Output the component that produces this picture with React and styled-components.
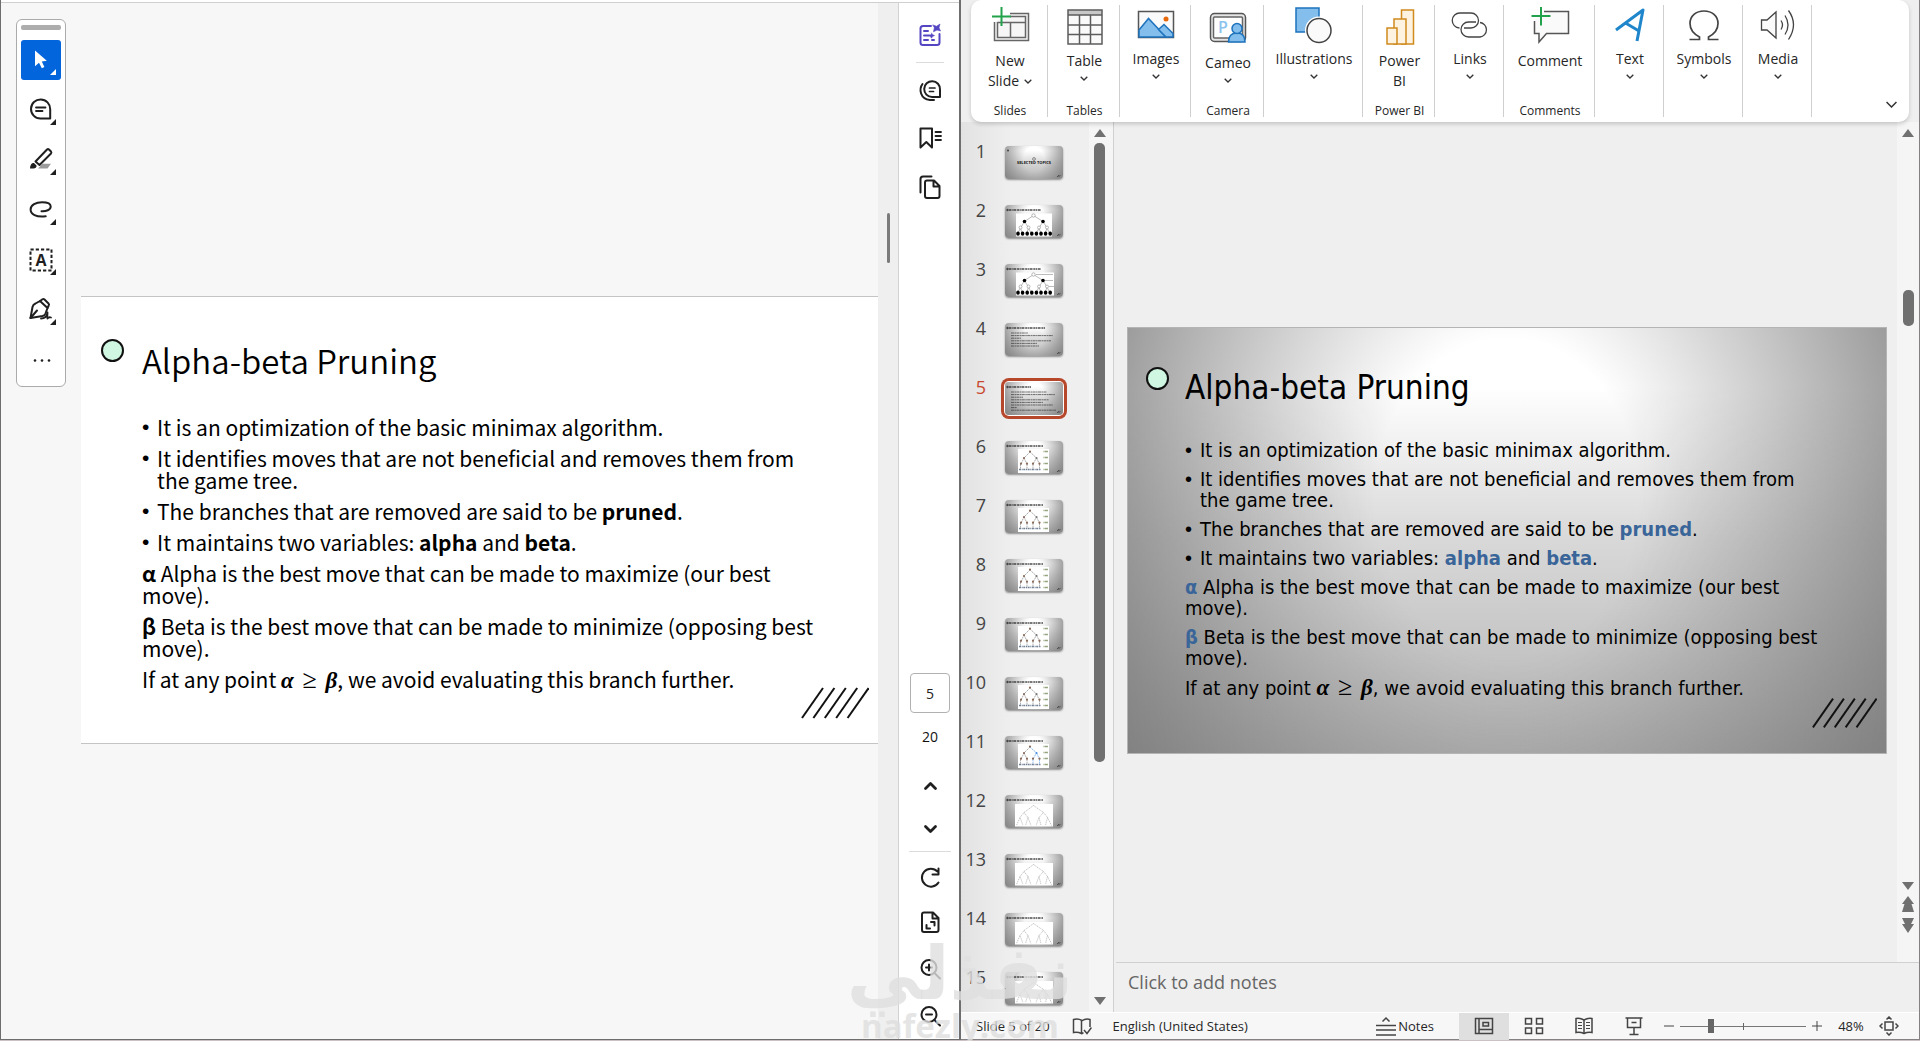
import React from 'react';
import styled, { createGlobalStyle, css } from 'styled-components';

const GlobalStyle = createGlobalStyle`
    * {
        box-sizing: border-box;
    }

    body {
        margin: 0;
        font-family: 'Open Sans', sans-serif;
        color: #262626;
        overflow: hidden;
    }

    button {
        border: 0;
        padding: 0;
        background: none;
        font: inherit;
        color: inherit;
    }

    svg {
        display: block;
        flex: none;
    }
`;

const Desktop = styled.div`
    position: relative;
    display: grid;
    grid-template-columns: 961fr 959fr;
    height: 100vh;
    border-bottom: 1px solid #cbc0c2;
`;

/* ---------- pdf reader ---------- */

const Reader = styled.section`
    position: relative;
    display: flex;
    min-width: 0;
    background: #f7f7f7;
    border: solid #6e6e6e;
    border-width: 0 2px 1px 1px;
`;

const ReaderEdge = styled.div`
    position: absolute;
    inset: 0 0 auto 0;
    height: 3px;
    background: #fff;
    border-bottom: 1px solid #cfcfcf;
`;

const ReaderCanvas = styled.div`
    flex: 1;
    min-width: 0;
    display: flex;
    align-items: center;
    padding: 1px 0 0 80px;
`;

const ReaderScroll = styled.div`
    width: 20px;
    padding: 213px 8px 0 9px;
    background: #efefef;
`;

const ReaderScrollThumb = styled.div`
    height: 50px;
    border-radius: 2px;
    background: #7a7a7a;
`;

const FloatingTools = styled.div`
    position: absolute;
    left: 15px;
    top: 19px;
    width: 50px;
    display: flex;
    flex-direction: column;
    align-items: center;
    gap: 10px;
    padding: 5px 0 6px;
    background: #fff;
    border: 1px solid #ababab;
    border-radius: 6px;
`;

const Grip = styled.div`
    width: 40px;
    height: 5px;
    border-radius: 2px;
    background: #adadad;
`;

const ToolButton = styled.button`
    width: 40px;
    height: 40px;
    border-radius: 3px;
    color: ${({ $active }) => ($active ? '#fff' : '#1f1f1f')};
    background: ${({ $active }) => ($active ? '#0265dc' : 'transparent')};
`;

const Rail = styled.div`
    display: flex;
    flex-direction: column;
    width: 61px;
    padding: 22px 0 10px 2px;
    align-items: center;
    background: #fff;
    border-left: 1px solid #d2d2d2;
    color: #1f1f1f;
`;

const RailButton = styled.button`
    width: 26px;
    height: 26px;
    margin-bottom: ${({ $gap }) => $gap || 0}px;

    svg {
        margin: 0 auto;
    }
`;

const RailLine = styled.hr`
    width: ${({ $wide }) => ($wide ? 42 : 28)}px;
    margin: ${({ $wide }) => ($wide ? '9px 0 13px' : '14px 0 14px')};
    border: 0;
    border-top: 1px solid #dcdcdc;
`;

const PageInput = styled.input`
    width: 40px;
    height: 40px;
    margin-top: auto;
    border: 1px solid #b1b1b1;
    border-radius: 4px;
    text-align: center;
    font: 14px 'Open Sans', sans-serif;
    color: #222;
`;

const PageTotal = styled.div`
    margin: 14px 0 25px;
    font-size: 14px;
    line-height: 20px;
    color: #111;
`;

/* ---------- the slide, shown in both windows ---------- */

const silver = css`
    background: radial-gradient(
            ellipse 58% 125% at 50% 40%,
            rgba(116, 116, 116, 0) 30%,
            rgba(116, 116, 116, 0.8) 100%
        ),
        linear-gradient(#fff 14%, #d8d8d8 50%, #b4b4b4 100%);
`;

const SlideFrame = styled.article`
    position: relative;
    flex: 1;
    min-width: 0;
    aspect-ratio: 16 / 9;
    padding: 43px 58px 0 61px;
    color: #000;
    background: #fff;
    border: solid #c4c4c4;
    border-width: 1px 0;
    font-family: 'Noto Sans CJK SC', sans-serif;
    font-size: 21px;
    line-height: 22px;

    b {
        font-weight: 700;
    }

    ${({ $themed }) =>
        $themed &&
        css`
            ${silver}
            padding: 40px 57px 0;
            border: 1px solid #b4b4b4;
            font-family: 'DejaVu Sans Condensed', 'DejaVu Sans', sans-serif;
            font-size: 20px;
            line-height: 21px;

            b {
                color: #3a6599;
            }
        `}
`;

const SlideTitle = styled.h1`
    margin: 0 0 ${({ $themed }) => ($themed ? 32 : 36)}px;
    font-size: 33px;
    line-height: 40px;
    font-weight: ${({ $themed }) => ($themed ? 400 : 350)};
`;

const SlideText = styled.p`
    margin: 0 0 ${({ $themed }) => ($themed ? 8 : 9)}px;
`;

const BulletText = styled(SlideText)`
    display: grid;
    grid-template-columns: 15px 1fr;

    &::before {
        content: '•';
        font-family: 'Liberation Sans', sans-serif;
    }
`;

const Formula = styled.span`
    font: italic 700 23px 'Liberation Serif', serif;
    line-height: 20px;

    i {
        margin: 0 3px;
        font-size: 26px;
        font-style: normal;
        font-weight: 400;
    }
`;

const Dot = styled.span`
    position: absolute;
    left: ${({ $themed }) => ($themed ? 18 : 20)}px;
    top: ${({ $themed }) => ($themed ? 39 : 42)}px;
    width: 23px;
    height: 23px;
    border: 2px solid #111;
    border-radius: 50%;
    background: #cff7e2;
`;

const Hatch = styled.svg`
    position: absolute;
    right: 9px;
    bottom: 24px;
`;

function Slide({ themed }) {
    return (
        <SlideFrame $themed={themed}>
            <Dot $themed={themed} />
            <SlideTitle $themed={themed}>Alpha-beta Pruning</SlideTitle>
            <BulletText $themed={themed}>
                <span>It is an optimization of the basic minimax algorithm.</span>
            </BulletText>
            <BulletText $themed={themed}>
                <span>
                    It identifies moves that are not beneficial and removes them
                    from the game tree.
                </span>
            </BulletText>
            <BulletText $themed={themed}>
                <span>
                    The branches that are removed are said to be <b>pruned</b>.
                </span>
            </BulletText>
            <BulletText $themed={themed}>
                <span>
                    It maintains two variables: <b>alpha</b> and <b>beta</b>.
                </span>
            </BulletText>
            <SlideText $themed={themed}>
                <b>α</b> Alpha is the best move that can be made to maximize (our
                best move).
            </SlideText>
            <SlideText $themed={themed}>
                <b>β</b> Beta is the best move that can be made to minimize
                (opposing best move).
            </SlideText>
            <SlideText $themed={themed}>
                If at any point{' '}
                <Formula>
                    α <i>≥</i> β
                </Formula>
                , we avoid evaluating this branch further.
            </SlideText>
            <Hatch
                width={themed ? 65 : 68}
                height="32"
                viewBox="0 0 68 32"
                stroke="#111"
                strokeWidth="2"
            >
                {[0, 1, 2, 3, 4].map((n) => (
                    <path key={n} d={`M${1 + n * 11.4} 31L${22 + n * 11.4} 1`} />
                ))}
            </Hatch>
        </SlideFrame>
    );
}

/* ---------- reader icons ---------- */

const Corner = () => <path d="M35 29v6h-6z" fill="currentColor" stroke="none" />;

function ToolIcon({ children }) {
    return (
        <svg
            width="40"
            height="40"
            fill="none"
            stroke="currentColor"
            strokeWidth="2"
            strokeLinecap="round"
            strokeLinejoin="round"
        >
            {children}
        </svg>
    );
}

const tools = [
    {
        name: 'Select',
        icon: (
            <>
                <path
                    d="M14 10.5v15.8l4-3.6 2.8 5.6 2.6-1.2-2.6-5.6 5-.8z"
                    fill="currentColor"
                    stroke="none"
                />
                <Corner />
            </>
        ),
    },
    {
        name: 'Comment',
        icon: (
            <>
                <path d="M29.2 19.2V28.6H19.4A9.6 9.6 0 1 1 29.2 19.2z" />
                <path d="M15 17.5h9.5M15 21h6.5" strokeWidth="1.8" />
                <Corner />
            </>
        ),
    },
    {
        name: 'Highlight',
        icon: (
            <>
                <path d="M21.5 23.7H30L26.5 28.5H17z" fill="#9b9b9b" stroke="none" />
                <path d="M14.5 21.5L26 9.5q1-.8 2 0l2 2q.8 1 0 2L18.5 25z" />
                <path
                    d="M9 28.5c0-4 2-6 4-5.5l2.5 2.5c.5 2-1.5 3-3 3z"
                    fill="currentColor"
                    stroke="none"
                />
                <Corner />
            </>
        ),
    },
    {
        name: 'Draw',
        icon: (
            <>
                <path d="M24.7 26.3C15 27.6 9.6 24 9.6 19.5 9.6 15 15 12.2 21 12.2c5 0 8.7 1.3 8.7 4.3 0 3.5-4.7 5-9.2 4.7" />
                <Corner />
            </>
        ),
    },
    {
        name: 'Text box',
        icon: (
            <>
                <rect
                    x="9.5"
                    y="9.5"
                    width="21"
                    height="21"
                    strokeLinecap="butt"
                    strokeDasharray="3.2 2.05"
                />
                <text
                    x="20"
                    y="25.5"
                    textAnchor="middle"
                    fontFamily="Open Sans, sans-serif"
                    fontSize="16"
                    fontWeight="700"
                    fill="currentColor"
                    stroke="none"
                >
                    A
                </text>
                <Corner />
            </>
        ),
    },
    {
        name: 'Sign',
        icon: (
            <>
                <path d="M9.5 28l2-11q.5-2.5 3-3.5L19 11l7.5 7-2 5.5q-.8 2-3 2.5z" />
                <path d="M19 11l2.5-1.8q1-.7 2 .3l4 4q1 1 .2 2L26.5 18M9.5 28l6.5-7.5" />
                <path d="M20 28.5c4 0 6-3 6.5-6 0 3-.5 5 0 6 1-1.5 2-1.5 3.5-1" strokeWidth="1.8" />
                <Corner />
            </>
        ),
    },
    {
        name: 'More tools',
        icon: (
            <g fill="currentColor" stroke="none">
                <circle cx="14" cy="20.5" r="1.3" />
                <circle cx="21" cy="20.5" r="1.3" />
                <circle cx="28" cy="20.5" r="1.3" />
            </g>
        ),
    },
];

function RailIcon({ children }) {
    return (
        <svg
            width="24"
            height="24"
            fill="none"
            stroke="currentColor"
            strokeWidth="2"
            strokeLinecap="round"
            strokeLinejoin="round"
        >
            {children}
        </svg>
    );
}

function Rails() {
    return (
        <Rail>
            <RailButton aria-label="AI assistant">
                <RailIcon>
                    <g stroke="#5446c2">
                        <path d="M13 3H5Q2.5 3 2.5 5.5v14Q2.5 22 5 22h14q2.5 0 2.5-2.5V11" />
                        <path d="M6 8h4M6 12.5h7M6 17h4M14 17h2" />
                        <path
                            d="M15 2l3.5 1.3L22 1l-1 3.8L22.5 8 19 7l-3.5 1.8.8-3.8zM13.5 10l1 1.7 2 .8-2 1-1 1.7-1-1.7"
                            fill="#5446c2"
                            strokeWidth=".6"
                        />
                    </g>
                </RailIcon>
            </RailButton>
            <RailLine />
            <RailButton aria-label="Comments" $gap={22}>
                <RailIcon>
                    <path d="M22 11.5V19h-8A7.9 7.9 0 1 1 22 11.5z" />
                    <path d="M11.5 10h5.5M11.5 13.5h4" strokeWidth="1.7" />
                    <path d="M4.5 6C.8 11 2 21 12 22h4" />
                </RailIcon>
            </RailButton>
            <RailButton aria-label="Bookmarks" $gap={23}>
                <RailIcon>
                    <path d="M2.5 2.5h11.5v19l-5.7-5.5-5.8 5.5z" />
                    <path d="M17.5 6H23M17.5 10H23M17.5 14H23" strokeWidth="1.8" />
                </RailIcon>
            </RailButton>
            <RailButton aria-label="Pages">
                <RailIcon>
                    <path d="M9 5.5h7l5.5 5.5v10q0 2-2 2H9q-2 0-2-2V7.5q0-2 2-2zM15.5 6v5.5H21" />
                    <path d="M13.5 1.5H5q-2.5 0-2.5 2.5v13.5" />
                </RailIcon>
            </RailButton>
            <PageInput aria-label="Page number" defaultValue="5" />
            <PageTotal>20</PageTotal>
            <RailButton aria-label="Previous page" $gap={18}>
                <RailIcon>
                    <path d="M7.5 15.5l5-5 5 5" strokeWidth="2.8" />
                </RailIcon>
            </RailButton>
            <RailButton aria-label="Next page">
                <RailIcon>
                    <path d="M7.5 9.5l5 5 5-5" strokeWidth="2.8" />
                </RailIcon>
            </RailButton>
            <RailLine $wide />
            <RailButton aria-label="Rotate" $gap={18}>
                <RailIcon>
                    <path d="M19.5 5.5A9 9 0 1 0 20.5 16.5M20.5 2.5v6h-6" />
                </RailIcon>
            </RailButton>
            <RailButton aria-label="Fit page" $gap={21}>
                <RailIcon>
                    <path d="M6 2.5h9l5.5 5.5v12q0 2-2 2H6q-2 0-2-2v-15.5q0-2 2-2zM14.5 3v5.5H20" />
                    <path d="M13 12h3.5v3.5M8.5 15v3.5H12" />
                </RailIcon>
            </RailButton>
            <RailButton aria-label="Zoom in" $gap={21}>
                <RailIcon>
                    <circle cx="11" cy="10.5" r="7.5" />
                    <path d="M16.5 16l5.5 5.5M8 10.5h6M11 7.5v6" />
                </RailIcon>
            </RailButton>
            <RailButton aria-label="Zoom out">
                <RailIcon>
                    <circle cx="11" cy="10.5" r="7.5" />
                    <path d="M16.5 16l5.5 5.5M8 10.5h6" />
                </RailIcon>
            </RailButton>
        </Rail>
    );
}

/* ---------- presentation editor ---------- */

const Editor = styled.section`
    display: flex;
    flex-direction: column;
    min-width: 0;
    min-height: 0;
    background: #efefef;
    border: solid #858081;
    border-width: 0 1px 1px 0;
`;

const Ribbon = styled.div`
    position: relative;
    z-index: 1;
    display: flex;
    height: 122px;
    margin: 0 10px;
    padding-top: 5px;
    background: #fff;
    border-radius: 10px;
    box-shadow: 0 2px 4px rgba(0, 0, 0, 0.18);
`;

const Group = styled.div`
    display: flex;
    flex-direction: column;
    align-items: center;
    justify-content: space-between;
    width: ${({ $width }) => $width}px;
    height: 112px;
    padding-left: 2px;
    border-right: 1px solid #cfcfcf;
`;

const GroupButton = styled.button`
    display: flex;
    flex-direction: column;
    align-items: center;
    gap: ${({ $gap }) => $gap}px;
    font-size: 14px;
    line-height: 20px;
`;

const Label = styled.span`
    display: flex;
    flex-direction: column;
    align-items: center;
    gap: 5px;
`;

const LabelRow = styled.span`
    display: flex;
    align-items: center;
    gap: 5px;
`;

const TwoLines = styled.span`
    display: flex;
    flex-direction: column;
    align-items: center;
`;

const GroupName = styled.span`
    font-size: 12px;
    line-height: 12px;
`;

const Collapse = styled.button`
    align-self: flex-end;
    margin: 0 11px 14px auto;
`;

const Chevron = ({ size = 8 }) => (
    <svg width={size} height={size / 2 + 1} viewBox="0 0 8 5" fill="none">
        <path
            d="M.7.7L4 4 7.3.7"
            stroke="#333"
            strokeWidth={size > 8 ? 1 : 1.3}
        />
    </svg>
);

const art = {
    newSlide: (
        <>
            <path d="M4.5 17v18.5h34V8.5H20" fill="#f6f6f6" stroke="#666" />
            <path d="M7.5 17v15.5h28v-21H20M7.5 17.5h28M20.5 17.5v15" stroke="#666" />
            <path d="M11.5 2v19M2 11.5h19" stroke="#22a24a" strokeWidth="2" />
        </>
    ),
    table: (
        <>
            <path d="M3 5h34v34H3z" fill="#fafafa" />
            <path d="M3 5h34v5H3z" fill="#c8c8c8" />
            <path
                d="M3 5h34v34H3zM3 10h34M3 20h34M3 29.5h34M14.5 10v29M25.5 10v29"
                stroke="#5c5c5c"
            />
        </>
    ),
    images: (
        <>
            <path d="M2.5 6.5h35v26h-35z" fill="#fafafa" stroke="#555" />
            <path d="M3 25l9.5-11.5L30 32H3z" fill="#83beec" stroke="#1e73bd" />
            <path d="M22.5 24.5l5.5-5 9 9V32H30z" fill="#83beec" stroke="#1e73bd" />
            <circle cx="30" cy="14" r="2.5" fill="#e8680c" />
        </>
    ),
    cameo: (
        <>
            <rect x="2.5" y="8.5" width="35" height="28" rx="4" fill="#e6e6e6" stroke="#555" />
            <rect x="5.5" y="12" width="29" height="21" rx="1" fill="#fff" stroke="#666" />
            <text
                x="10"
                y="28"
                fontFamily="Open Sans, sans-serif"
                fontSize="16"
                fontWeight="600"
                fill="#8cc4ee"
            >
                P
            </text>
            <path
                d="M20.5 37c0-6 3-9 8.5-9s8 3 8 9z"
                fill="#83beec"
                stroke="#1e73bd"
            />
            <circle cx="29" cy="23.5" r="5" fill="#83beec" stroke="#1e73bd" />
        </>
    ),
    illustrations: (
        <>
            <path d="M2 3h23v24H2z" fill="#83beec" stroke="#1e73bd" />
            <circle cx="25" cy="25.5" r="14" fill="#fff" />
            <circle cx="25" cy="25.5" r="12" fill="#fafafa" stroke="#444" />
        </>
    ),
    powerBi: (
        <g fill="#fdf3e0" stroke="#d08a1e" strokeWidth="1.5">
            <path d="M21.5 5h12v34h-12z" />
            <path d="M14 14h12v25H14z" />
            <path d="M7 23h10v16H7z" />
        </g>
    ),
    links: (
        <g stroke="#444" strokeWidth="1.3">
            <path d="M9.5 23A7.5 7.5 0 0 1 10 8h11a7.5 7.5 0 0 1 0 15h-7" />
            <path d="M30 17.5a7.3 7.3 0 0 1 0 14.5H18.5a7.3 7.3 0 0 1 0-15H26" />
        </g>
    ),
    comment: (
        <>
            <path
                d="M4.5 16v12.5H9v8.5l7.5-8.5H38.5v-22H14"
                fill="#fafafa"
                stroke="#555"
            />
            <path d="M11 2v18.5M1.5 11h19" stroke="#22a24a" strokeWidth="2" />
        </>
    ),
    text: (
        <path
            d="M6 25L33 5 27 36M15.5 18l13.5 8"
            stroke="#1f86cc"
            strokeWidth="3"
            strokeLinejoin="round"
        />
    ),
    symbols: (
        <path
            d="M5.5 34.5H15.5V32C8 28 6 23.5 6 18.5 6 11 12 6 20 6s14 5 14 12.5c0 5-2 9.5-9.5 13.5v2.5h10"
            stroke="#444"
            strokeWidth="1.7"
        />
    ),
    media: (
        <g stroke="#444" strokeWidth="1.3">
            <path d="M3.5 15H9l9-8v26l-9-8H3.5z" fill="#fafafa" />
            <path d="M23 15.5q3 4.5 0 9M27 10.5q6 9.500 0 19M30.5 5.5q10 14 0 29" />
        </g>
    ),
};

const groups = [
    { art: 'newSlide', text: ['New', 'Slide'], arrow: true, name: 'Slides', width: 77, gap: 6 },
    { art: 'table', text: ['Table'], arrow: true, name: 'Tables', width: 72, gap: 6 },
    { art: 'images', text: ['Images'], arrow: true, width: 71, gap: 4 },
    { art: 'cameo', text: ['Cameo'], arrow: true, name: 'Camera', width: 73, gap: 8 },
    { art: 'illustrations', text: ['Illustrations'], arrow: true, width: 99, gap: 4 },
    { art: 'powerBi', text: ['Power', 'BI'], name: 'Power BI', width: 72, gap: 6 },
    { art: 'links', text: ['Links'], arrow: true, width: 69, gap: 4 },
    { art: 'comment', text: ['Comment'], name: 'Comments', width: 91, gap: 6 },
    { art: 'text', text: ['Text'], arrow: true, width: 69, gap: 4 },
    { art: 'symbols', text: ['Symbols'], arrow: true, width: 79, gap: 4 },
    { art: 'media', text: ['Media'], arrow: true, width: 69, gap: 4 },
];

function GroupLabel({ text, arrow }) {
    if (text.length > 1) {
        return (
            <TwoLines>
                <span>{text[0]}</span>
                <LabelRow>
                    {text[1]}
                    {arrow && <Chevron />}
                </LabelRow>
            </TwoLines>
        );
    }
    return (
        <Label>
            {text[0]}
            {arrow && <Chevron />}
        </Label>
    );
}

const Workspace = styled.div`
    flex: 1;
    min-height: 0;
    display: flex;
`;

const ThumbPane = styled.div`
    display: flex;
    width: 153px;
    border-right: 1px solid #d0d0d0;
    background: linear-gradient(90deg, #e2e2e2, #efefef 50px);
`;

const ThumbList = styled.ol`
    flex: 1;
    min-width: 0;
    margin: 0;
    padding: 19px 0 0;
    list-style: none;
    overflow: hidden;
`;

const ThumbRow = styled.li`
    display: grid;
    grid-template-columns: 25px 58px;
    column-gap: 19px;
    height: 59px;
    font-size: 18px;
    line-height: 20px;
    text-align: right;
    color: ${({ $current }) => ($current ? '#c8472e' : '#444')};
`;

const ThumbButton = styled.button`
    ${silver}
    height: 33px;
    margin-top: 5px;
    border-radius: 4px;
    overflow: hidden;
    box-shadow: ${({ $current }) =>
        $current
            ? '0 0 0 1px #fff, 0 0 0 4px #b7472a'
            : '0 1px 2px rgba(0, 0, 0, 0.4)'};
`;

const ScrollColumn = styled.div`
    display: flex;
    flex-direction: column;
    align-items: center;
    gap: 6px;
    width: ${({ $width }) => $width}px;
    padding: ${({ $padding }) => $padding};
    background: #f5f5f5;
    color: #707070;
`;

const ScrollTrack = styled.div`
    flex: 1;
    display: flex;
    flex-direction: column;
    width: 11px;
`;

const ScrollSpace = styled.div`
    flex: ${({ $part }) => $part} 0 0;
`;

const ScrollThumb = styled.div`
    flex: ${({ $part }) => $part} 0 0;
    border-radius: 5px;
    background: #707070;
`;

const Arrow = ({ down, double }) => (
    <svg width="12" height={double ? 16 : 8} fill="currentColor">
        {down ? (
            <path d={double ? 'M0 0h12L9 6h3l-6 9-6-9h3z' : 'M0 0h12L6 8z'} />
        ) : (
            <path d={double ? 'M6 0l6 8H9.5l2.5 8H0l2.5-8H0z' : 'M6 0l6 8H0z'} />
        )}
    </svg>
);

const ThumbTitle = ({ width = 34 }) => (
    <>
        <circle cx="2.5" cy="5" r="1.2" fill="#444" />
        <path
            d={`M4 5h${width}`}
            stroke="#222"
            strokeWidth="1.4"
            strokeDasharray="2 .5 1.2 .6 3 .8"
            opacity=".8"
        />
        <path d="M52 31l2-2M53.5 31l2-2" stroke="#333" strokeWidth=".7" />
    </>
);

const leaves = [0, 1, 2, 3, 4, 5, 6, 7];

function MinimaxTree({ notes }) {
    return (
        <>
            <path d={`M11 8.5h${notes ? 38 : 36}v23H11z`} fill="#fff" />
            <g stroke="#777" strokeWidth=".5" fill="none">
                <path d="M28.5 10.5l-9 6-4 6.5-3 6M19.5 16.5l4 6.5 3 6M15.5 23l2 6M23.5 23l-2 6M28.5 10.5l9.5 6-4 6.5-3 6M38 16.5l4 6.5 3 6M34 23l2 6M42 23l-2 6" />
                {notes && <path d="M31 10.5h17M40 16.5h8M44 22.5h5" />}
            </g>
            <g stroke="#777" strokeWidth=".5" fill="#fff">
                <circle cx="28.5" cy="10.5" r="1.7" />
                <circle cx="15.5" cy="22.5" r="1.5" />
                <circle cx="23.5" cy="22.5" r="1.5" />
                <circle cx="34" cy="22.5" r="1.5" />
                <circle cx="42" cy="22.5" r="1.5" />
            </g>
            <circle cx="19.5" cy="16.5" r="1.8" />
            <circle cx="38" cy="16.5" r="1.8" />
            {leaves.map((n) => (
                <ellipse key={n} cx={13 + n * 4.6} cy="28.7" rx="1.8" ry="2.1" />
            ))}
        </>
    );
}

function ExampleTree({ accent }) {
    return (
        <>
            <path d="M13 8h31v24H13z" fill="#fff" />
            <g stroke="#777" strokeWidth=".6" fill="none" strokeDasharray="2 .6">
                <path d="M25 11l-6 6-3 6M19 17l3 6M15.5 23v5M22 23v5" />
                <path d="M25 11l6.5 6-3.5 6M31.5 17l3 6M28 23v5M34.5 23v5" stroke={accent} />
            </g>
            <g fill="#8a6a58">
                <circle cx="25" cy="10.5" r="1.1" />
                <circle cx="19" cy="17" r="1.1" />
                <circle cx="31.5" cy="17" r="1.1" fill={accent} />
                {[16, 22, 28, 34.5].map((x) => (
                    <circle key={x} cx={x} cy="22.7" r="1.1" />
                ))}
            </g>
            <path d="M14 28.5h22" stroke="#6f7f94" strokeWidth="1.6" strokeDasharray="2 .7 1 .6" />
            <path
                d="M38.5 10.5h5M38.5 16.5h5M38.5 22.5h5M38.5 28.5h5"
                stroke="#93a37c"
                strokeWidth="1.6"
                strokeDasharray="1 .4 3 1"
            />
        </>
    );
}

function FaintTree() {
    return (
        <>
            <path d="M10 9h38v22.5H10z" fill="#fff" />
            <path
                d="M28.5 10.5l-9.5 7-4 5-3.5 8M19 17.5l4 5 3 8M15 22.5l3 8M23 22.5l-2.5 8M28.5 10.5l10 7-4.5 5-3 8M38.5 17.5l4 5 4 8M34 22.5l2 8M42.5 22.5l-2 8"
                stroke="#999"
                strokeWidth=".6"
                strokeDasharray="1.3 .8"
                fill="none"
            />
        </>
    );
}

function TextLines({ rows }) {
    return rows.map((w, n) => (
        <path
            key={n}
            d={`M6 ${10 + n * 2.6}h${w}`}
            stroke="#333"
            strokeWidth=".9"
            strokeDasharray="3 .5 1.5 .4"
            opacity=".75"
        />
    ));
}

function ThumbArt({ number }) {
    if (number === 1) {
        return (
            <>
                <circle cx="3" cy="4.5" r="1" fill="#444" />
                <circle cx="29" cy="13" r="1.4" fill="none" stroke="#444" strokeWidth=".6" />
                <text
                    x="29"
                    y="17.5"
                    textAnchor="middle"
                    fontFamily="Open Sans, sans-serif"
                    fontSize="4"
                    fontWeight="700"
                    fill="#111"
                >
                    SELECTED TOPICS
                </text>
                <path d="M52 31l2-2M53.5 31l2-2" stroke="#333" strokeWidth=".7" />
            </>
        );
    }
    if (number < 4) {
        return (
            <>
                <ThumbTitle width={32} />
                <MinimaxTree notes={number === 3} />
            </>
        );
    }
    if (number < 6) {
        return (
            <>
                <ThumbTitle width={number === 4 ? 36 : 22} />
                <TextLines
                    rows={number === 4 ? [17, 42, 10, 40, 26, 28] : [36, 44, 12, 38, 32, 42, 6, 45]}
                />
            </>
        );
    }
    return (
        <>
            <ThumbTitle />
            {number < 12 ? (
                <ExampleTree accent={number === 11 ? '#4a90e2' : '#777'} />
            ) : (
                <FaintTree />
            )}
        </>
    );
}

const EditColumn = styled.div`
    flex: 1;
    min-width: 0;
    display: flex;
    flex-direction: column;
`;

const EditArea = styled.div`
    flex: 1;
    min-height: 0;
    display: flex;
`;

const SlideStage = styled.div`
    flex: 1;
    min-width: 0;
    display: flex;
    align-items: center;
    padding: 0 10px 3px 13px;
`;

const Notes = styled.textarea`
    height: 50px;
    margin-left: 2px;
    padding: 7px 12px;
    border: 0;
    border-top: 1px solid #d0d0d0;
    outline: 0;
    resize: none;
    background: #efefef;
    font: 18px/24px 'Open Sans', sans-serif;

    &::placeholder {
        color: #666;
        opacity: 1;
    }
`;

const StatusBar = styled.footer`
    display: flex;
    align-items: center;
    height: 27px;
    padding: 0 20px 0 15px;
    background: #f7f7f7;
    border-top: 1px solid #fff;
    font-size: 13px;
    line-height: 20px;
    white-space: nowrap;
`;

const StatusButton = styled.button`
    display: flex;
    align-items: center;
    gap: 2px;
    margin-left: ${({ $before }) => $before}px;
`;

const ViewButtons = styled.div`
    display: flex;
    margin: 0 4px 0 25px;
`;

const ViewButton = styled.button`
    display: flex;
    align-items: center;
    justify-content: center;
    width: 50px;
    height: 27px;
    background: ${({ $active }) => ($active ? '#dfdfdf' : 'transparent')};
`;

const StatusSpring = styled.div`
    flex: 1;
`;

const ZoomRange = styled.input`
    appearance: none;
    width: 126px;
    height: 14px;
    margin: 0 5px;
    background: linear-gradient(#666, #666) center / 1px 7px no-repeat,
        linear-gradient(#777, #777) center / 100% 1px no-repeat;

    &::-webkit-slider-thumb {
        appearance: none;
        width: 6px;
        height: 14px;
        background: #666;
    }
`;

const Percent = styled.output`
    width: 44px;
    margin-left: 6px;
    text-align: center;
`;

const StatusIcon = ({ children, width = 20 }) => (
    <svg width={width} height="20" fill="none" stroke="#444" strokeWidth="1.5">
        {children}
    </svg>
);

const Watermark = styled.div`
    position: absolute;
    left: 50%;
    bottom: 0;
    z-index: 2;
    transform: translateX(-50%);
    display: flex;
    flex-direction: column;
    align-items: center;
    font-weight: 700;
    color: rgba(222, 222, 222, 0.8);
    pointer-events: none;
`;

const WatermarkName = styled.span`
    font-family: 'DejaVu Sans', sans-serif;
    font-size: 74px;
    line-height: 78px;
`;

const WatermarkSite = styled.span`
    font-size: 33px;
    line-height: 28px;
`;

const thumbs = Array.from({ length: 15 }, (_, n) => n + 1);

export default function App() {
    return (
        <Desktop>
            <GlobalStyle />
            <Reader>
                <ReaderCanvas>
                    <Slide />
                </ReaderCanvas>
                <ReaderScroll>
                    <ReaderScrollThumb />
                </ReaderScroll>
                <Rails />
                <ReaderEdge />
                <FloatingTools>
                    <Grip />
                    {tools.map((tool, n) => (
                        <ToolButton key={tool.name} aria-label={tool.name} $active={n === 0}>
                            <ToolIcon>{tool.icon}</ToolIcon>
                        </ToolButton>
                    ))}
                </FloatingTools>
            </Reader>

            <Editor>
                <Ribbon>
                    {groups.map((g) => (
                        <Group key={g.art} $width={g.width}>
                            <GroupButton $gap={g.gap}>
                                <svg width="40" height="40" fill="none" strokeWidth="1.5">
                                    {art[g.art]}
                                </svg>
                                <GroupLabel text={g.text} arrow={g.arrow} />
                            </GroupButton>
                            {g.name && <GroupName>{g.name}</GroupName>}
                        </Group>
                    ))}
                    <Collapse aria-label="Collapse ribbon">
                        <Chevron size={13} />
                    </Collapse>
                </Ribbon>

                <Workspace>
                    <ThumbPane>
                        <ThumbList>
                            {thumbs.map((n) => (
                                <ThumbRow key={n} $current={n === 5}>
                                    <span>{n}</span>
                                    <ThumbButton aria-label={`Slide ${n}`} $current={n === 5}>
                                        <svg width="58" height="33">
                                            <ThumbArt number={n} />
                                        </svg>
                                    </ThumbButton>
                                </ThumbRow>
                            ))}
                        </ThumbList>
                        <ScrollColumn $width={24} $padding="7px 3px 7px 0">
                            <Arrow />
                            <ScrollTrack>
                                <ScrollThumb $part={73} />
                                <ScrollSpace $part={27} />
                            </ScrollTrack>
                            <Arrow down />
                        </ScrollColumn>
                    </ThumbPane>
                    <EditColumn>
                        <EditArea>
                            <SlideStage>
                                <Slide themed />
                            </SlideStage>
                            <ScrollColumn $width={22} $padding="7px 0 28px">
                                <Arrow />
                                <ScrollTrack>
                                    <ScrollSpace $part={20} />
                                    <ScrollThumb $part={5} />
                                    <ScrollSpace $part={75} />
                                </ScrollTrack>
                                <Arrow down />
                                <Arrow double />
                                <Arrow double down />
                            </ScrollColumn>
                        </EditArea>
                        <Notes aria-label="Notes" placeholder="Click to add notes" />
                    </EditColumn>
                </Workspace>

                <StatusBar>
                    <span>Slide 5 of 20</span>
                    <StatusButton aria-label="Spelling" $before={22}>
                        <StatusIcon>
                            <path d="M10 4.5Q6 2 1.5 3.5v13q4-1 8 1V5Q14 2 18 3.5V11M9.5 17.5l2-.8M12 14l3 3.5 4.5-6" />
                        </StatusIcon>
                    </StatusButton>
                    <StatusButton $before={21}>English (United States)</StatusButton>
                    <StatusSpring />
                    <StatusButton>
                        <StatusIcon>
                            <path d="M0 9.5h20M0 14h20M0 19h20M6.5 5.5L10 2l3.5 3.5" />
                        </StatusIcon>
                        Notes
                    </StatusButton>
                    <ViewButtons>
                        <ViewButton aria-label="Normal" $active>
                            <StatusIcon>
                                <path d="M1.5 2.5h17v15h-17zM5 2.5v15M5 13.5h13.5M9 6.5h5.5v3.5H9z" />
                            </StatusIcon>
                        </ViewButton>
                        <ViewButton aria-label="Slide sorter">
                            <StatusIcon>
                                <path d="M1.5 2.5h6v5.5h-6zM12.5 2.5h6v5.5h-6zM1.5 12h6v5.5h-6zM12.5 12h6v5.5h-6z" />
                            </StatusIcon>
                        </ViewButton>
                        <ViewButton aria-label="Reading view">
                            <StatusIcon>
                                <path d="M10 4Q6 1.5 2 2.5v14q4-.8 8 1 4-1.8 8-1v-14Q14 1.5 10 4zM10 4v14" />
                                <path
                                    d="M4 6.500h4M4 9.500h4M4 12.500h4M12 6.500h4M12 9.500h4M12 12.500h4"
                                    strokeWidth="1"
                                />
                            </StatusIcon>
                        </ViewButton>
                        <ViewButton aria-label="Slide show">
                            <StatusIcon>
                                <path d="M1.5 2h17M3.5 2v9.5h13V2M7.5 6.5h5M10 11.5V18M5.5 18.5h9" />
                            </StatusIcon>
                        </ViewButton>
                    </ViewButtons>
                    <StatusButton aria-label="Zoom out">
                        <StatusIcon width={12}>
                            <path d="M1 10h10" strokeWidth="1" />
                        </StatusIcon>
                    </StatusButton>
                    <ZoomRange type="range" aria-label="Zoom" defaultValue="23" />
                    <StatusButton aria-label="Zoom in">
                        <StatusIcon width={12}>
                            <path d="M1 10h10M6 5v10" strokeWidth="1" />
                        </StatusIcon>
                    </StatusButton>
                    <Percent>48%</Percent>
                    <StatusButton aria-label="Fit to window" $before={6}>
                        <StatusIcon>
                            <path d="M6 6h8v8H6zM7.5 3.5L10 1l2.5 2.5M7.5 16.5L10 19l2.5-2.5M3.5 7.5L1 10l2.5 2.5M16.5 7.5L19 10l-2.5 2.5" />
                        </StatusIcon>
                    </StatusButton>
                </StatusBar>
            </Editor>

            <Watermark>
                <WatermarkName>نفذلي</WatermarkName>
                <WatermarkSite>nafezly.com</WatermarkSite>
            </Watermark>
        </Desktop>
    );
}
